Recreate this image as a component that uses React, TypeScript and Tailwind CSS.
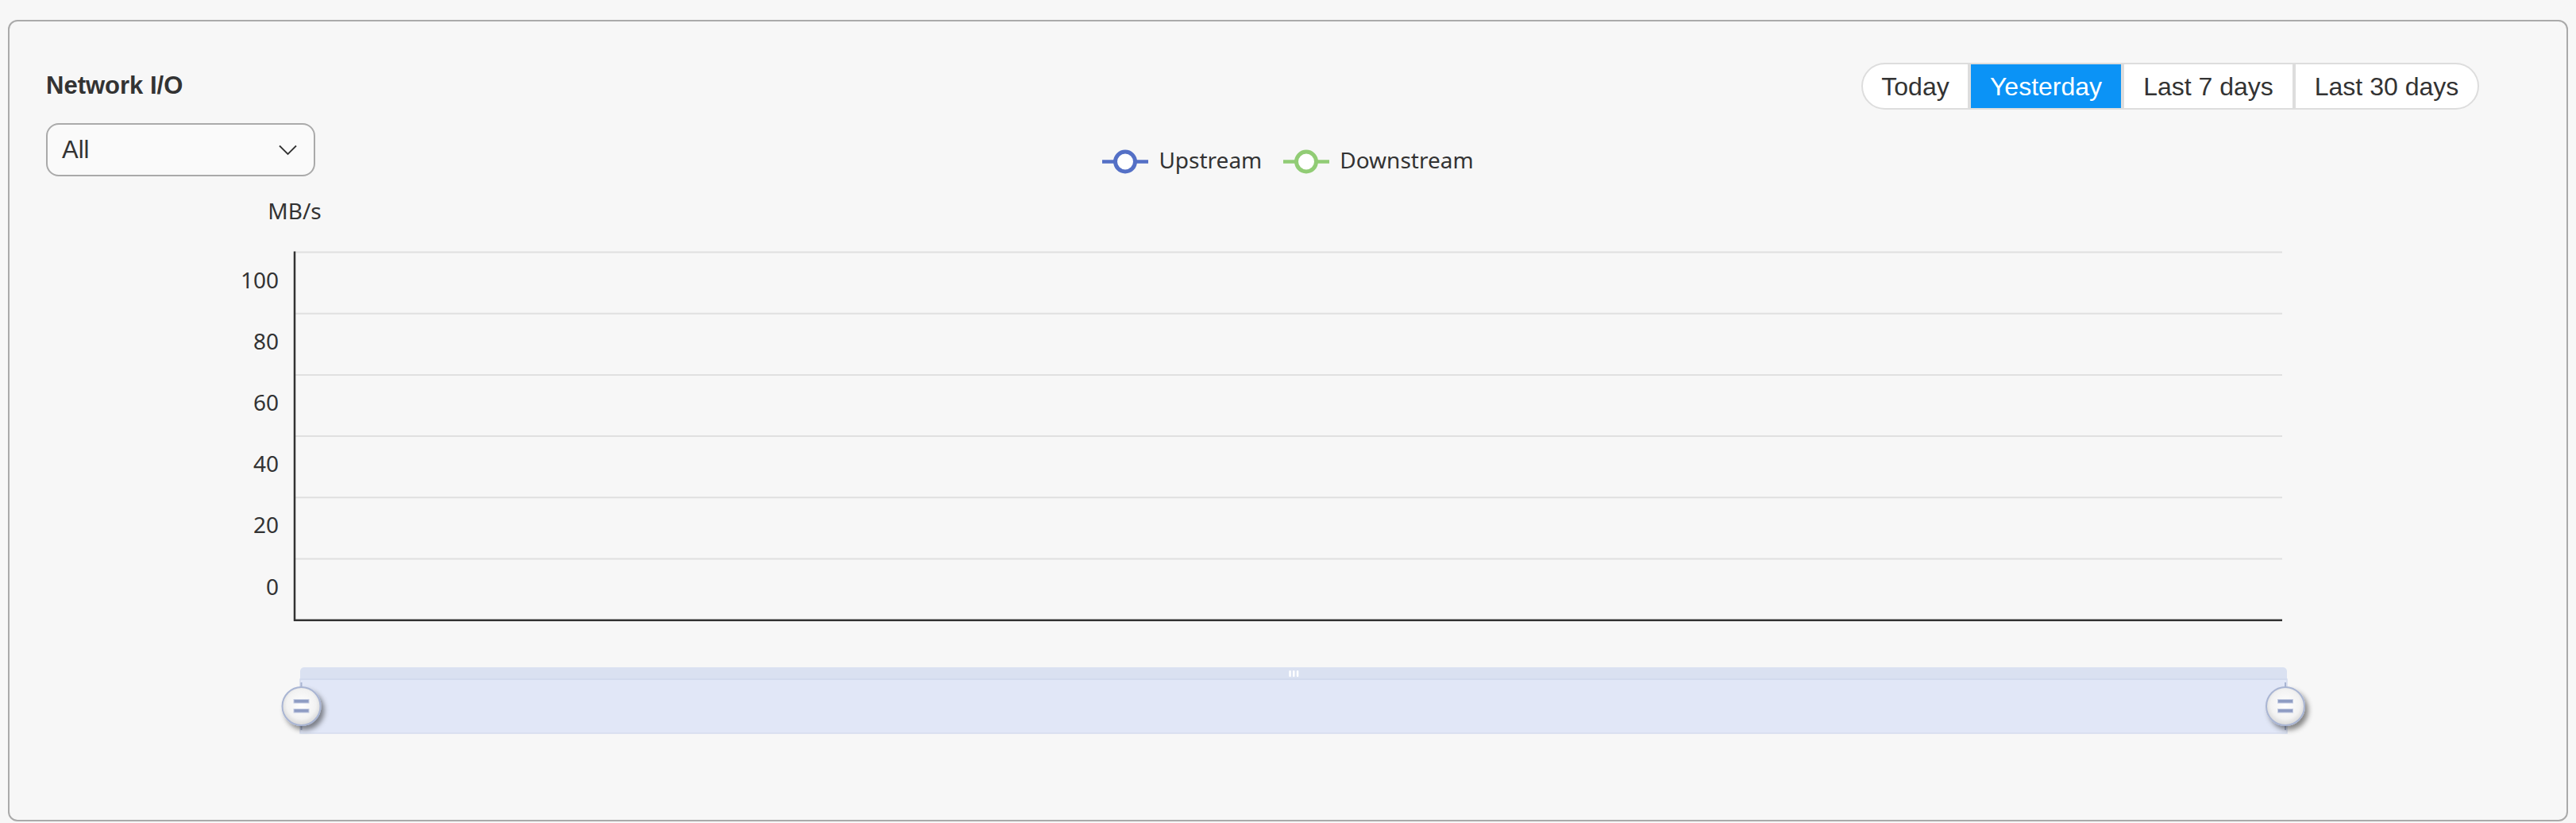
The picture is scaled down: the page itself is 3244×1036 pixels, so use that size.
const ranges = [
  { label: 'Today', className: 'w-[136px] rounded-l-full bg-white text-[#333333]' },
  { label: 'Yesterday', className: 'w-[193px] bg-[#0b93f6] text-white' },
  { label: 'Last 7 days', className: 'w-[216px] bg-white text-[#333333]' },
  { label: 'Last 30 days', className: 'w-[233px] rounded-r-full bg-white text-[#333333]' },
]

const yTicks = [100, 80, 60, 40, 20, 0]
const STEP = 77.2
const TOP = 317.5
const LEFT = 371
const RIGHT = 2874

function LegendItem({ color, label }: { color: string; label: string }) {
  return (
    <div className="flex h-[31px] items-center gap-[13px]">
      <svg width="58" height="31" viewBox="0 0 58 31">
        <line x1="0" y1="15.5" x2="58" y2="15.5" stroke={color} strokeWidth="4.5" />
        <circle cx="29" cy="15.5" r="12.5" fill="#ffffff" stroke={color} strokeWidth="5" />
      </svg>
      <span className="mb-[5px] font-['Noto_Sans',sans-serif] text-[28px] leading-none text-[#333333]">
        {label}
      </span>
    </div>
  )
}

function Handle({ cx }: { cx: number }) {
  return (
    <g>
      <line x1={cx} y1={859} x2={cx} y2={865} stroke="#a9b5d3" strokeWidth="2" />
      <line x1={cx} y1={913} x2={cx} y2={919} stroke="#a9b5d3" strokeWidth="2" />
      <circle
        cx={cx}
        cy={889}
        r={24}
        fill="url(#handleFill)"
        stroke="#a9b5d3"
        strokeWidth="2"
        filter="url(#handleShadow)"
      />
      <rect x={cx - 9.5} y={880.5} width={19} height={4.5} fill="#8e9cc3" stroke="#c4cce2" strokeWidth="1" />
      <rect x={cx - 9.5} y={892.5} width={19} height={4.5} fill="#8e9cc3" stroke="#c4cce2" strokeWidth="1" />
    </g>
  )
}

function Chart() {
  return (
    <svg width="3220" height="720" viewBox="12 240 3220 720" className="block">
      <defs>
        <radialGradient id="handleFill" cx="50%" cy="45%" r="55%">
          <stop offset="0%" stopColor="#ffffff" />
          <stop offset="70%" stopColor="#f2f2f2" />
          <stop offset="100%" stopColor="#d6d6d6" />
        </radialGradient>
        <filter id="handleShadow" x="-50%" y="-50%" width="200%" height="200%">
          <feDropShadow dx="4" dy="5" stdDeviation="3" floodColor="#000000" floodOpacity="0.45" />
        </filter>
      </defs>

      <text
        x={LEFT}
        y={275.5}
        textAnchor="middle"
        fontFamily="'Noto Sans', sans-serif"
        fontSize="28"
        fill="#333333"
      >
        MB/s
      </text>

      {yTicks.map((_, i) => (
        <line
          key={`g${i}`}
          x1={LEFT}
          y1={TOP + STEP * i}
          x2={RIGHT}
          y2={TOP + STEP * i}
          stroke="#e0e0e0"
          strokeWidth="2"
        />
      ))}

      {yTicks.map((v, i) => (
        <text
          key={`t${v}`}
          x={351}
          y={362.5 + STEP * i}
          textAnchor="end"
          fontFamily="'Noto Sans', sans-serif"
          fontSize="28"
          fill="#333333"
        >
          {v}
        </text>
      ))}

      <line x1={LEFT} y1={TOP - 1} x2={LEFT} y2={TOP + STEP * 6 + 1} stroke="#333333" strokeWidth="2.5" />
      <line x1={LEFT - 1} y1={TOP + STEP * 6} x2={RIGHT} y2={TOP + STEP * 6} stroke="#333333" strokeWidth="2.5" />

      {/* data zoom slider */}
      <rect x={378} y={840} width={2502} height={20} rx={5} fill="#dae1f1" />
      <rect x={378} y={855} width={2502} height={68} fill="#e1e7f7" stroke="#d5dcee" strokeWidth="1.5" />
      <line x1={378} y1={855} x2={2880} y2={855} stroke="#d1d9ed" strokeWidth="1.5" />
      <rect x={1623.3} y={844} width={2.5} height={8} rx={1} fill="#ffffff" />
      <rect x={1628} y={844} width={2.5} height={8} rx={1} fill="#ffffff" />
      <rect x={1632.8} y={844} width={2.5} height={8} rx={1} fill="#ffffff" />

      <Handle cx={379.5} />
      <Handle cx={2878} />
    </svg>
  )
}

export default function App() {
  return (
    <div className="min-h-[1036px] w-[3244px] bg-[#f7f7f7] pl-[10px] pt-[25px]">
      <div className="h-[1009px] w-[3224px] rounded-xl border-2 border-[#aaaaaa] bg-[#f7f7f7]">
        <div className="grid h-[213px] grid-cols-[1fr_auto_1fr]">
          <div className="pl-[46px] pt-[63px]">
            <h2 className="font-['Liberation_Sans',Arial,sans-serif] text-[31px] font-bold leading-[36px] text-[#333333]">
              Network I/O
            </h2>
            <button
              type="button"
              className="mt-[29px] flex h-[67px] w-[339px] items-center justify-between rounded-2xl border-2 border-[#aaaaaa] bg-[#fafafa] pl-[18px] pr-[21px]"
            >
              <span className="font-['Liberation_Sans',Arial,sans-serif] text-[31px] leading-none text-[#333333]">
                All
              </span>
              <svg width="23" height="14" viewBox="0 0 23 14" className="mt-[1px]">
                <polyline points="1,1.5 11.5,12 22,1.5" fill="none" stroke="#333333" strokeWidth="1.8" />
              </svg>
            </button>
          </div>

          <div className="flex items-start gap-[27px] pt-[161px]">
            <LegendItem color="#5470c6" label="Upstream" />
            <LegendItem color="#91cc75" label="Downstream" />
          </div>

          <div className="flex justify-end pr-[110px] pt-[52px]">
            <div className="flex h-[59px] items-start">
              {ranges.map((r) => (
                <button
                  key={r.label}
                  type="button"
                  className={`flex h-[59px] items-center justify-center border-2 border-[#dddddd] font-['Liberation_Sans',Arial,sans-serif] text-[32px] leading-none ${r.className}`}
                >
                  {r.label}
                </button>
              ))}
            </div>
          </div>
        </div>

        <Chart />
      </div>
    </div>
  )
}
